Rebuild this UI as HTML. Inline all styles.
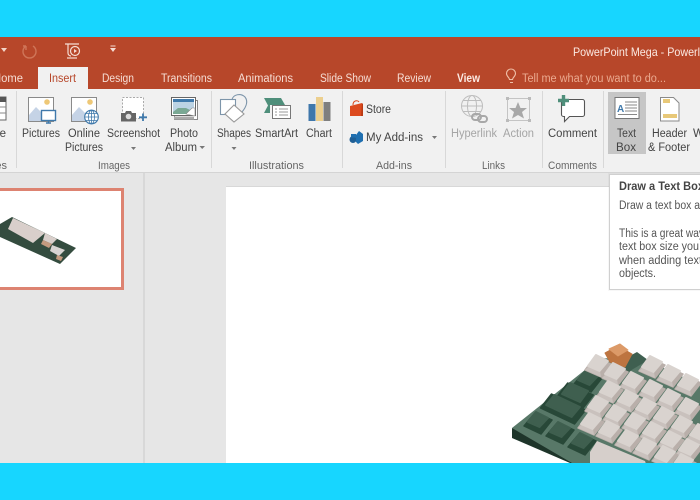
<!DOCTYPE html>
<html><head><meta charset="utf-8"><style>
html,body{margin:0;padding:0;background:#fff}
svg{display:block;filter:blur(.35px)}
text{font-family:"Liberation Sans",sans-serif;font-size:11.5px;fill:#444}
.m{text-anchor:middle}
.t{fill:#f6ddd4;font-size:11.5px}
.g{fill:#666}
.d{fill:#a5a5a5}
.h{fill:#666;font-size:11px}
.p{fill:#555}
</style></head><body>
<svg width="700" height="500" viewBox="0 0 700 500" xmlns="http://www.w3.org/2000/svg">
<defs>
<g id="k" stroke-linejoin="round">
<polygon points="-3,-10 13,-3 3,10 -13,3" fill="#b9afaa" stroke="#b9afaa" stroke-width="1.500"/>
<polygon points="-13,3 -9,-1 2,4 3,10" fill="#c9c1bd"/>
<polygon points="-2,-12 10,-6 1.500,4 -10,-1" fill="#d9d3cf" stroke="#d9d3cf" stroke-width="2"/>
</g>
<g id="gk" stroke-linejoin="round">
<polygon points="-3,-10 14,-3 3,11 -14,3" fill="#284838" stroke="#284838" stroke-width="1.500"/>
<polygon points="-2,-11 10,-5 1.500,4 -10,-1" fill="#3f5f4f" stroke="#3f5f4f" stroke-width="2"/>
</g>
<g id="g15" stroke-linejoin="round">
<polygon points="-7.250,-13 18.250,-1 7.250,13 -18.250,1" fill="#284838" stroke="#284838" stroke-width="1.500"/>
<polygon points="-5,-13 13,-5 5,6 -13,-2" fill="#3f5f4f" stroke="#3f5f4f" stroke-width="2"/>
</g>
<g id="g2" stroke-linejoin="round">
<polygon points="-11.500,-15 22.500,1 11.500,15 -22.500,-1" fill="#284838" stroke="#284838" stroke-width="1.500"/>
<polygon points="-8.600,-14 16.900,-2 8.600,8 -16.900,-4" fill="#3f5f4f" stroke="#3f5f4f" stroke-width="2"/>
</g>
</defs>
<rect width="700" height="500" fill="#e6e6e6"/>
<!-- title + tabs -->
<rect y="37" width="700" height="52" fill="#b7472a"/>
<!-- ribbon -->
<rect y="89" width="700" height="83" fill="#f1f1f1"/>
<rect y="172" width="700" height="1" fill="#d4d4d4"/>
<rect x="38" y="67" width="50" height="23" fill="#f1f1f1"/>
<!-- QAT icons -->
<polygon points="1,48 7,48 4,52" fill="#f4d5c8"/>
<path d="M26 46a6.500 6.500 0 1 0 7 0M26 46v4M26 46h-3" fill="none" stroke="#cf7558" stroke-width="1.400"/>
<g fill="none" stroke="#f6ddd4" stroke-width="1.200"><path d="M65 44h14M68 44v9a3 3 0 0 0 3 3"/><circle cx="75" cy="51" r="4.500"/><path d="M67 58h10"/></g>
<polygon points="74,49 74,53 77,51" fill="#f6ddd4"/>
<path d="M110.500 46h5" stroke="#f6ddd4" stroke-width="1"/><polygon points="110,48 116,48 113,52" fill="#f6ddd4"/>
<text x="573" y="56" lengthAdjust="spacingAndGlyphs" textLength="127" style="fill:#fbe9e2;font-size:12px">PowerPoint Mega - Powerl</text>
<!-- tabs -->
<text x="23" y="82" class="t" text-anchor="end" lengthAdjust="spacingAndGlyphs" textLength="30">Home</text>
<text x="62.500" y="82" class="m" lengthAdjust="spacingAndGlyphs" textLength="27" style="fill:#b7472a">Insert</text>
<text x="118" y="82" class="t m" lengthAdjust="spacingAndGlyphs" textLength="32">Design</text>
<text x="186.500" y="82" class="t m" lengthAdjust="spacingAndGlyphs" textLength="51">Transitions</text>
<text x="265.500" y="82" class="t m" lengthAdjust="spacingAndGlyphs" textLength="55">Animations</text>
<text x="345.500" y="82" class="t m" lengthAdjust="spacingAndGlyphs" textLength="51">Slide Show</text>
<text x="414" y="82" class="t m" lengthAdjust="spacingAndGlyphs" textLength="34">Review</text>
<text x="468.500" y="82" class="t m" lengthAdjust="spacingAndGlyphs" textLength="23" style="fill:#fbe9e2;font-weight:bold">View</text>
<text x="522" y="82" lengthAdjust="spacingAndGlyphs" textLength="144" style="fill:#eba98f">Tell me what you want to do...</text>
<g fill="none" stroke="#efbfa8" stroke-width="1.100"><path d="M510 82.500h3M509.500 79.500c0-2-3-3-3-6a4.500 4.500 0 0 1 9 0c0 3-3 4-3 6z"/></g>
<!-- separators -->
<g fill="#d8d8d8"><rect x="16" y="91" width="1" height="77"/><rect x="211" y="91" width="1" height="77"/><rect x="342" y="91" width="1" height="77"/><rect x="445" y="91" width="1" height="77"/><rect x="542" y="91" width="1" height="77"/><rect x="603" y="91" width="1" height="77"/></g>
<!-- highlight -->
<rect x="608" y="92" width="38" height="62" fill="#c6c6c6"/>
<!-- table icon -->
<rect x="-3" y="97" width="9" height="23" fill="#fff" stroke="#666"/>
<rect x="-3" y="97" width="9" height="5" fill="#555"/>
<path d="M-3 107h9M-3 113h9" stroke="#888"/>
<!-- Pictures -->
<rect x="28.500" y="97.500" width="25" height="24" fill="#fff" stroke="#8a8a8a"/>
<path d="M29 121v-6l7-8 9 9 3 5z" fill="#c5d3e6"/>
<circle cx="47" cy="102" r="2.800" fill="#eec877"/>
<rect x="41.500" y="110.500" width="14" height="10" fill="#fff" stroke="#3f79ab" stroke-width="1.400"/>
<path d="M46 123h5M48.500 121v2" stroke="#3f79ab" stroke-width="1.400"/>
<!-- Online -->
<rect x="71.500" y="97.500" width="25" height="24" fill="#fff" stroke="#8a8a8a"/>
<path d="M72 121v-6l7-8 9 9 3 5z" fill="#c5d3e6"/>
<circle cx="90" cy="102" r="2.800" fill="#eec877"/>
<circle cx="91.500" cy="117" r="6.800" fill="#fff" stroke="#3f79ab" stroke-width="1.100"/>
<path d="M85 117h13M86 113.500h11M86 120.500h11M91.500 110v14" stroke="#3f79ab" stroke-width=".8" fill="none"/>
<ellipse cx="91.500" cy="117" rx="3" ry="6.800" fill="none" stroke="#3f79ab" stroke-width=".8"/>
<!-- Screenshot -->
<rect x="122.500" y="97.500" width="21" height="21" fill="#fff" stroke="#aaa" stroke-dasharray="2 1.500"/>
<path d="M121 113h4l1-2h5l1 2h4v8.500h-15z" fill="#666"/>
<circle cx="128.500" cy="116.500" r="2.800" fill="#ddd"/>
<path d="M143 113.500v7.500M139 117.300h8" stroke="#3f79ab" stroke-width="1.800"/>
<polygon points="131,147 136,147 133.500,150" fill="#777"/>
<!-- Album -->
<rect x="174.500" y="100.500" width="23" height="19" fill="#fff" stroke="#888"/>
<rect x="171.500" y="97.500" width="24" height="18" fill="#fff" stroke="#666"/>
<rect x="173" y="99" width="21" height="15" fill="#bcd3e4"/>
<path d="M173 99h21v3h-21z" fill="#3f79ab"/>
<path d="M173 112l5-4h8l8 4v2h-21z" fill="#7aa894"/>
<path d="M186 114l6-6 3 0v8z" fill="#fff" stroke="#888" stroke-width=".6"/>
<rect x="174" y="116.500" width="20" height="3" fill="#aaa"/>
<polygon points="199.500,146 205,146 202.200,149" fill="#777"/>
<!-- Shapes -->
<rect x="220.500" y="99.500" width="15" height="15" fill="#fff" stroke="#7d95aa" stroke-width="1.100"/>
<path d="M232 100c1-6 9-7 13-3 3 4 2 9-3 15" fill="none" stroke="#7d95aa" stroke-width="1.100"/>
<polygon points="234,105 244,114 234,122 225,114" fill="#fff" stroke="#999" stroke-width="1.100"/>
<polygon points="231.500,147 236.500,147 234,150" fill="#777"/>
<!-- SmartArt -->
<polygon points="264,98 281,98 285,105 270,105 270,113 264,113 268,105.500" fill="#4f8f7b"/>
<rect x="272.500" y="105.500" width="18" height="13" fill="#fff" stroke="#777"/>
<path d="M275 109h2M279 109h9M275 112h2M279 112h9M275 115h2M279 115h9" stroke="#999" stroke-width=".9"/>
<!-- Chart -->
<rect x="308.500" y="104" width="7" height="17" fill="#3f77ab"/>
<rect x="316" y="97" width="7" height="24" fill="#eccf8e"/>
<rect x="323.500" y="102" width="7" height="19" fill="#7f7f7f"/>
<!-- Store -->
<path d="M350 106l12-3v13l-12 0z" fill="#dc4a1e"/><path d="M362 103l1 1v12h-2z" fill="#b93a14"/>
<path d="M353 105c0-5 5-5 6-3" fill="none" stroke="#dc4a1e" stroke-width="1"/>
<!-- Add-ins -->
<circle cx="353" cy="139.500" r="3.500" fill="#1f5f96"/>
<path d="M356 135l3-4 4 3v7l-5 3-2-2z" fill="#1f6fb0"/>
<rect x="351" y="134" width="5" height="3.500" fill="#1f6fb0"/>
<polygon points="432,136 437,136 434.500,139" fill="#777"/>
<!-- Hyperlink -->
<g fill="none" stroke="#bdbdbd" stroke-width="1"><circle cx="472" cy="106" r="10.500"/><ellipse cx="472" cy="106" rx="4.500" ry="10.500"/><path d="M461.500 106h21M463 100.500h18M463 111.500h18"/></g>
<g fill="none" stroke="#a8a8a8" stroke-width="2"><rect x="472" y="114" width="9" height="6" rx="3"/><rect x="478" y="116" width="9" height="6" rx="3"/></g>
<!-- Action -->
<rect x="507.500" y="98.500" width="22" height="22" fill="none" stroke="#c4c4c4"/>
<g fill="#bbb"><rect x="506" y="97" width="3" height="3"/><rect x="528" y="97" width="3" height="3"/><rect x="506" y="119" width="3" height="3"/><rect x="528" y="119" width="3" height="3"/></g>
<polygon points="518,102 520.500,108 527,108 522,112 524,118.500 518,115 512,118.500 514,112 509,108 515.500,108" fill="#a8a8a8"/>
<!-- Comment -->
<path d="M561.500 99.500h21a2 2 0 0 1 2 2v13a2 2 0 0 1-2 2h-13l-5 5v-5h-1a2 2 0 0 1-2-2z" fill="#fff" stroke="#555" stroke-width="1.100"/>
<path d="M563.500 95v11M558 100.500h11" stroke="#4f8f7b" stroke-width="3.400"/>
<!-- Text box -->
<rect x="615" y="97.500" width="24" height="21" fill="#fff" stroke="#777"/>
<text x="617" y="112" style="fill:#3f79ab;font-size:10px;font-weight:bold">A</text>
<path d="M625 102h12M625 105h12M625 108h12M625 111h12M618 114.500h19" stroke="#888" stroke-width=".9"/>
<!-- Header -->
<path d="M660.500 97.500h13l5.500 5.500v18h-18.500z" fill="#fff" stroke="#8a8a8a"/>
<rect x="663" y="99" width="7" height="4" fill="#e8c878"/>
<rect x="663" y="114" width="14" height="4" fill="#e8c878"/>
<!-- Ribbon labels -->
<text x="6" y="137" text-anchor="end">e</text>
<text x="41" y="137" class="m" lengthAdjust="spacingAndGlyphs" textLength="38">Pictures</text>
<text x="84" y="137" class="m" lengthAdjust="spacingAndGlyphs" textLength="32">Online</text>
<text x="84" y="151" class="m" lengthAdjust="spacingAndGlyphs" textLength="38">Pictures</text>
<text x="133.500" y="137" class="m" lengthAdjust="spacingAndGlyphs" textLength="53">Screenshot</text>
<text x="184" y="137" class="m" lengthAdjust="spacingAndGlyphs" textLength="28">Photo</text>
<text x="181" y="151" class="m" lengthAdjust="spacingAndGlyphs" textLength="32">Album</text>
<text x="234" y="137" class="m" lengthAdjust="spacingAndGlyphs" textLength="34">Shapes</text>
<text x="276.500" y="137" class="m" lengthAdjust="spacingAndGlyphs" textLength="43">SmartArt</text>
<text x="319" y="137" class="m" lengthAdjust="spacingAndGlyphs" textLength="26">Chart</text>
<text x="366" y="113" lengthAdjust="spacingAndGlyphs" textLength="25">Store</text>
<text x="366" y="141" lengthAdjust="spacingAndGlyphs" textLength="57">My Add-ins</text>
<text x="474" y="137" class="m d" lengthAdjust="spacingAndGlyphs" textLength="46">Hyperlink</text>
<text x="518.500" y="137" class="m d" lengthAdjust="spacingAndGlyphs" textLength="31">Action</text>
<text x="572.500" y="137" class="m" lengthAdjust="spacingAndGlyphs" textLength="49">Comment</text>
<text x="626.500" y="137" class="m" lengthAdjust="spacingAndGlyphs" textLength="19">Text</text>
<text x="626" y="151" class="m" lengthAdjust="spacingAndGlyphs" textLength="20">Box</text>
<text x="669.500" y="137" class="m" lengthAdjust="spacingAndGlyphs" textLength="35">Header</text>
<text x="669" y="151" class="m" lengthAdjust="spacingAndGlyphs" textLength="42">&amp; Footer</text>
<text x="693" y="137">W</text>
<text x="7" y="169" class="h" text-anchor="end">es</text>
<text x="114" y="169" class="h m" lengthAdjust="spacingAndGlyphs" textLength="32">Images</text>
<text x="276.500" y="169" class="h m" lengthAdjust="spacingAndGlyphs" textLength="55">Illustrations</text>
<text x="394" y="169" class="h m" lengthAdjust="spacingAndGlyphs" textLength="36">Add-ins</text>
<text x="493.500" y="169" class="h m" lengthAdjust="spacingAndGlyphs" textLength="23">Links</text>
<text x="572.500" y="169" class="h m" lengthAdjust="spacingAndGlyphs" textLength="49">Comments</text>
<!-- panes -->
<rect x="143.500" y="173" width="1" height="290" fill="#cbcbcb"/>
<rect x="226" y="186" width="474" height="277" fill="#fff"/>
<rect x="226" y="186" width="474" height="1" fill="#d8d8d8"/>
<!-- thumbnail -->
<rect x="-4" y="189.500" width="126.500" height="99" fill="#fff" stroke="#dd8371" stroke-width="3"/>
<polygon points="0,224 12,217 76,248 60,264 0,237" fill="#344c3f"/>
<polygon points="8,229 13,218 45,233 33,243" fill="#d9cfcb"/>
<polygon points="45,233 57,239 52,244 43,240" fill="#d9cfcb"/>
<polygon points="43,240 52,244 49,248 41,244" fill="#c49a7f"/>
<polygon points="52,245 65,250 59,256 50,251" fill="#d8d4d2"/>
<polygon points="57,255 63,257 61,261 56,259" fill="#c49a7f"/>
<!-- keyboard plate -->
<g>
<polygon points="512,428 512,438 570,463 600,463" fill="#1e352a"/>
<polygon points="512,428 600,358 647,360 700,385 700,463 572,463" fill="#587868"/>
<polygon points="600,372 637,352 648,360 625,374" fill="#3f5f50"/>
<use href="#gk" x="588" y="381"/>
<use href="#g15" x="575" y="396"/>
<use href="#g2" x="563" y="409"/>
<use href="#gk" x="538" y="423"/><use href="#gk" x="560" y="433"/><use href="#gk" x="582" y="444"/>
<use href="#k" x="598" y="367"/>
<!-- orange -->
<polygon points="605,353 618,346 632,354 625,367 610,362" fill="#bd7440" stroke="#bd7440" stroke-linejoin="round"/>
<polygon points="609,349 620,344 628,350 618,356" fill="#dc9a68" stroke="#dc9a68" stroke-linejoin="round"/>
<!-- rows -->
<use href="#k" x="652" y="368"/><use href="#k" x="670" y="377"/><use href="#k" x="688" y="386"/>
<use href="#k" x="615" y="375"/><use href="#k" x="633" y="384"/><use href="#k" x="652" y="392"/><use href="#k" x="670" y="401"/><use href="#k" x="688" y="410"/>
<use href="#k" x="610" y="393"/><use href="#k" x="628" y="402"/><use href="#k" x="646" y="410"/><use href="#k" x="664" y="419"/><use href="#k" x="682" y="428"/><use href="#k" x="700" y="436"/>
<use href="#k" x="598" y="408"/><use href="#k" x="616" y="417"/><use href="#k" x="635" y="425"/><use href="#k" x="653" y="434"/><use href="#k" x="671" y="443"/><use href="#k" x="689" y="451"/>
<use href="#k" x="591" y="425"/><use href="#k" x="609" y="433"/><use href="#k" x="628" y="442"/><use href="#k" x="646" y="450"/><use href="#k" x="665" y="458"/><use href="#k" x="683" y="466"/>
<polygon points="590,452 597,441 645,461 648,470 590,470" fill="#d6cfcb"/>
</g>
<!-- tooltip -->
<rect x="608" y="173" width="102" height="118" fill="#000" opacity=".03"/>
<rect x="609.500" y="174.500" width="100" height="115" fill="#fff" stroke="#d0d0d0"/>
<text x="619" y="190" lengthAdjust="spacingAndGlyphs" textLength="85" style="fill:#444;font-weight:bold">Draw a Text Box</text>
<text x="619" y="209" class="p" lengthAdjust="spacingAndGlyphs" textLength="81">Draw a text box a</text>
<text x="619" y="237" class="p" lengthAdjust="spacingAndGlyphs" textLength="85">This is a great way</text>
<text x="619" y="250" class="p" lengthAdjust="spacingAndGlyphs" textLength="80">text box size you</text>
<text x="619" y="264" class="p" lengthAdjust="spacingAndGlyphs" textLength="83">when adding text</text>
<text x="619" y="277" class="p" lengthAdjust="spacingAndGlyphs" textLength="37">objects.</text>
<!-- cyan bands -->
<rect width="700" height="37" fill="#17d6ff"/>
<rect y="463" width="700" height="37" fill="#17d6ff"/>
</svg>
</body></html>
